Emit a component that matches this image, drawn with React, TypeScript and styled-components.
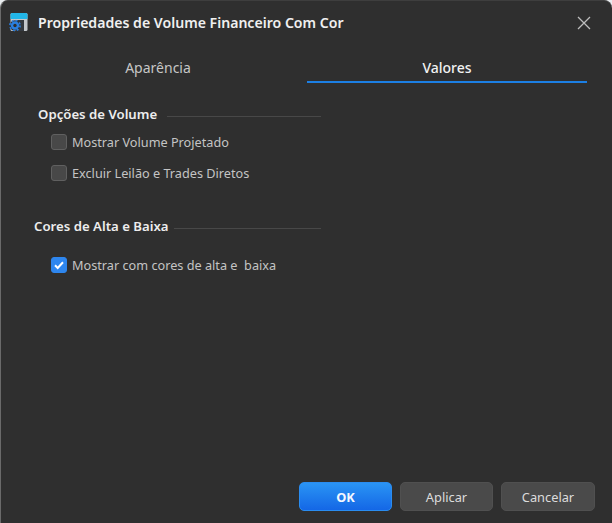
import { createGlobalStyle } from 'styled-components'
import styled from 'styled-components'

const Global = createGlobalStyle`
	html, body {
		margin: 0;
		padding: 0;
		background: #e9ecef;
	}
`

const Dialog = styled.div`
	box-sizing: border-box;
	width: 612px;
	height: 523px;
	display: flex;
	flex-direction: column;
	background: #2f2f2f;
	border-left: 1px solid #6a6a6a;
	border-top: 1px solid #3e3e3e;
	border-radius: 8px 8px 0 0;
	font-family: 'Noto Sans', 'Open Sans', sans-serif;
	overflow: hidden;
`

const TitleBar = styled.div`
	display: flex;
	align-items: center;
	height: 43px;
	padding: 0 21px 0 7px;
	flex: none;
`

const Title = styled.div`
	margin-left: 10px;
	flex: 1;
	font-size: 14.1px;
	font-weight: 600;
	color: #f0f0f0;
	white-space: nowrap;
`

const Tabs = styled.div`
	display: grid;
	grid-template-columns: 260px 280px;
	column-gap: 19px;
	padding-left: 27px;
	height: 39px;
	flex: none;
`

const Tab = styled.div<{ $active?: boolean }>`
	display: flex;
	align-items: center;
	justify-content: center;
	box-sizing: border-box;
	padding-top: 9px;
	font-size: 14px;
	color: ${props => (props.$active ? '#f2f2f2' : '#c6c6c6')};
	font-weight: ${props => (props.$active ? 500 : 400)};
	border-bottom: 2px solid ${props => (props.$active ? '#1c7fe4' : 'transparent')};
`

const Body = styled.div`
	flex: 1;
	display: flex;
	flex-direction: column;
	padding-top: 21px;
`

const Section = styled.div<{ $left: number; $gap: number }>`
	width: ${props => 321 - props.$left}px;
	padding-left: ${props => props.$left - 1}px;
	margin-bottom: ${props => props.$gap}px;
`

const SectionHead = styled.div<{ $gap: number }>`
	display: flex;
	align-items: center;
	gap: ${props => props.$gap}px;
	height: 20px;
	font-size: 13.2px;
	font-weight: 600;
	color: #ededed;
	white-space: nowrap;
`

const Rule = styled.div`
	flex: 1;
	height: 1px;
	margin-top: 5px;
	background: #484848;
`

const Row = styled.div<{ $indent: number; $top: number }>`
	display: flex;
	align-items: center;
	height: 20px;
	margin-top: ${props => props.$top}px;
	margin-left: ${props => props.$indent}px;
	gap: 5px;
	font-size: 12.7px;
	color: #c4c4c4;
	white-space: pre;
`

const Check = styled.div<{ $on?: boolean }>`
	box-sizing: border-box;
	width: 16px;
	height: 16px;
	flex: none;
	display: flex;
	align-items: center;
	justify-content: center;
	border-radius: 3px;
	background: ${props => (props.$on ? '#2e86ee' : '#484848')};
	border: 1px solid ${props => (props.$on ? '#2e86ee' : '#606060')};
`

const Footer = styled.div`
	display: flex;
	justify-content: flex-end;
	gap: 8px;
	padding: 0 17px 12px 0;
	flex: none;
`

const Button = styled.div<{ $primary?: boolean; $width: number }>`
	box-sizing: border-box;
	width: ${props => props.$width}px;
	height: 29px;
	display: flex;
	align-items: center;
	justify-content: center;
	border-radius: 5px;
	font-size: 12.8px;
	font-weight: ${props => (props.$primary ? 700 : 400)};
	color: ${props => (props.$primary ? '#f4f8ff' : '#dcdcdc')};
	background: ${props => (props.$primary ? 'linear-gradient(#2a94f4, #1467e6)' : '#4a4a4a')};
	border: 1px solid ${props => (props.$primary ? '#2a8cf0' : '#505050')};
`

const AppIcon = () => (
	<svg width="20" height="20" viewBox="0 0 20 20">
		<rect x="2.500" y="0" width="17" height="18" rx="1.500" fill="#c4c8cc" />
		<path d="M2.500 1.500A1.500 1.500 0 0 1 4 0h14A1.500 1.500 0 0 1 19.500 1.500V6H2.500z" fill="#22b6e8" />
		<rect x="8" y="7" width="8" height="11" fill="#34393f" />
		<circle cx="7" cy="12.500" r="5.200" fill="#2f2f2f" />
		<circle cx="7" cy="12.500" r="4.200" fill="#2a7fe0" />
		<circle cx="7" cy="12.500" r="5.100" fill="none" stroke="#2a7fe0" strokeWidth="1.600" strokeDasharray="2 2" />
		<circle cx="7" cy="12.500" r="1.700" fill="#2f2f2f" />
	</svg>
)

const CloseIcon = () => (
	<svg width="14" height="14" viewBox="0 0 14 14">
		<path d="M1 1l12 12M13 1L1 13" stroke="#bdbdbd" strokeWidth="1.300" fill="none" />
	</svg>
)

const Tick = () => (
	<svg width="12" height="12" viewBox="0 0 12 12">
		<path d="M2 6.300l2.700 2.700L10 3.300" stroke="#fff" strokeWidth="2" fill="none" />
	</svg>
)

export default function App() {
	return (
		<>
			<Global />
			<Dialog>
				<TitleBar>
					<AppIcon />
					<Title>Propriedades de Volume Financeiro Com Cor</Title>
					<CloseIcon />
				</TitleBar>
				<Tabs>
					<Tab>Aparência</Tab>
					<Tab $active>Valores</Tab>
				</Tabs>
				<Body>
					<Section $left={38} $gap={33}>
						<SectionHead $gap={10}>
							Opções de Volume
							<Rule />
						</SectionHead>
						<Row $indent={13} $top={8}>
							<Check />
							Mostrar Volume Projetado
						</Row>
						<Row $indent={13} $top={11}>
							<Check />
							Excluir Leilão e Trades Diretos
						</Row>
					</Section>
					<Section $left={34} $gap={0}>
						<SectionHead $gap={5}>
							Cores de Alta e Baixa
							<Rule />
						</SectionHead>
						<Row $indent={17} $top={19}>
							<Check $on>
								<Tick />
							</Check>
							{'Mostrar com cores de alta e  baixa'}
						</Row>
					</Section>
				</Body>
				<Footer>
					<Button $primary $width={93}>OK</Button>
					<Button $width={93}>Aplicar</Button>
					<Button $width={94}>Cancelar</Button>
				</Footer>
			</Dialog>
		</>
	)
}
